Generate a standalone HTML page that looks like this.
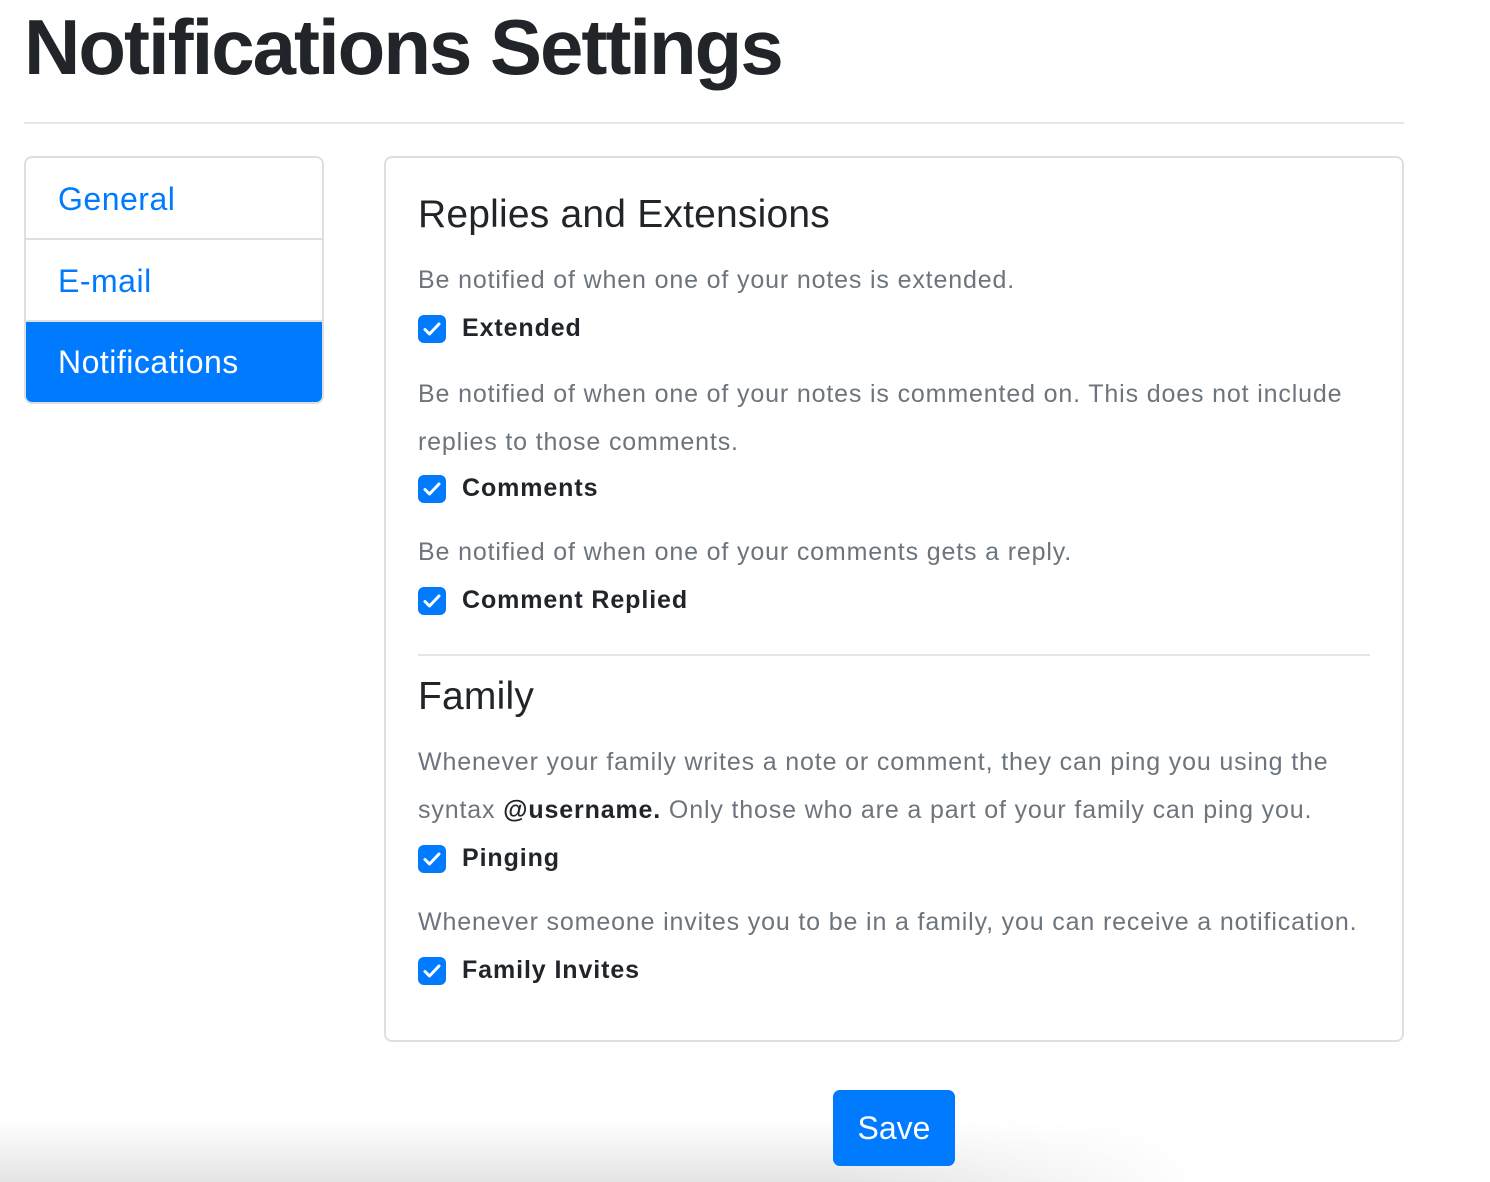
<!DOCTYPE html>
<html><head><meta charset="utf-8"><style>
*{box-sizing:border-box;margin:0;padding:0}
body{width:1490px;height:1182px;overflow:hidden;background:#fff;font-family:"Liberation Sans",sans-serif;color:#212529;position:relative}
h1{position:absolute;left:24px;top:2px;font-size:78px;font-weight:bold;letter-spacing:-2px;line-height:90px}
.hr{position:absolute;left:24px;top:122px;width:1380px;height:2px;background:#e5e5e5}
.nav{position:absolute;left:24px;top:156px;width:300px;border:2px solid #dfdfdf;border-radius:8px;overflow:hidden}
.nav div{height:82px;line-height:82px;padding-left:32px;font-size:32px;color:#007bff;border-bottom:2px solid #dfdfdf;letter-spacing:0.5px}
.nav div.act{background:#007bff;color:#fff;border-bottom:none;height:80px;line-height:80px}
.card{position:absolute;left:384px;top:156px;width:1020px;height:886px;border:2px solid #dfdfdf;border-radius:8px}
.t{position:absolute;left:418px;white-space:nowrap}
h2{font-size:39px;font-weight:500;letter-spacing:0.2px}
.p{font-size:25px;color:#6c757d;letter-spacing:0.85px}
.p b{color:#212529}
.c{font-size:25px;font-weight:bold;padding-left:44px;letter-spacing:0.9px}
.c:before{content:"";position:absolute;left:0;top:1px;width:28px;height:28px;border-radius:6px;background:#007bff}
.c svg{position:absolute;left:4px;top:5px}
.line{position:absolute;left:418px;top:654px;width:952px;height:2px;background:#e5e5e5}
.btn{position:absolute;left:833px;top:1090px;width:122px;height:76px;background:#007bff;border-radius:7px;color:#fff;font-size:32px;text-align:center;line-height:76px}
.shade{position:absolute;left:0;top:1120px;width:1200px;height:62px;background:linear-gradient(to bottom,rgba(230,230,230,0),rgba(228,228,228,1));-webkit-mask-image:linear-gradient(to right,#000 70%,transparent 100%)}
</style></head><body>
<div class="shade"></div>
<h1>Notifications Settings</h1>
<div class="hr"></div>
<div class="nav"><div>General</div><div>E-mail</div><div class="act">Notifications</div></div>
<div class="card"></div>
<div class="t" style="top:193px"><h2>Replies and Extensions</h2></div>
<div class="t p" style="top:266px">Be notified of when one of your notes is extended.</div>
<div class="t c" style="top:314px"><svg width="20" height="20" viewBox="0 0 20 20"><path d="M3 10.5l4.5 4.5L17 5" stroke="#fff" stroke-width="3" fill="none" stroke-linecap="round" stroke-linejoin="round"/></svg>Extended</div>
<div class="t p" style="top:370px;line-height:48px">Be notified of when one of your notes is commented on. This does not include<br>replies to those comments.</div>
<div class="t c" style="top:474px"><svg width="20" height="20" viewBox="0 0 20 20"><path d="M3 10.5l4.5 4.5L17 5" stroke="#fff" stroke-width="3" fill="none" stroke-linecap="round" stroke-linejoin="round"/></svg>Comments</div>
<div class="t p" style="top:538px">Be notified of when one of your comments gets a reply.</div>
<div class="t c" style="top:586px"><svg width="20" height="20" viewBox="0 0 20 20"><path d="M3 10.5l4.5 4.5L17 5" stroke="#fff" stroke-width="3" fill="none" stroke-linecap="round" stroke-linejoin="round"/></svg>Comment Replied</div>
<div class="line"></div>
<div class="t" style="top:675px"><h2>Family</h2></div>
<div class="t p" style="top:738px;line-height:48px">Whenever your family writes a note or comment, they can ping you using the<br>syntax <b>@username.</b> Only those who are a part of your family can ping you.</div>
<div class="t c" style="top:844px"><svg width="20" height="20" viewBox="0 0 20 20"><path d="M3 10.5l4.5 4.5L17 5" stroke="#fff" stroke-width="3" fill="none" stroke-linecap="round" stroke-linejoin="round"/></svg>Pinging</div>
<div class="t p" style="top:908px">Whenever someone invites you to be in a family, you can receive a notification.</div>
<div class="t c" style="top:956px"><svg width="20" height="20" viewBox="0 0 20 20"><path d="M3 10.5l4.5 4.5L17 5" stroke="#fff" stroke-width="3" fill="none" stroke-linecap="round" stroke-linejoin="round"/></svg>Family Invites</div>
<div class="btn">Save</div>
</body></html>
